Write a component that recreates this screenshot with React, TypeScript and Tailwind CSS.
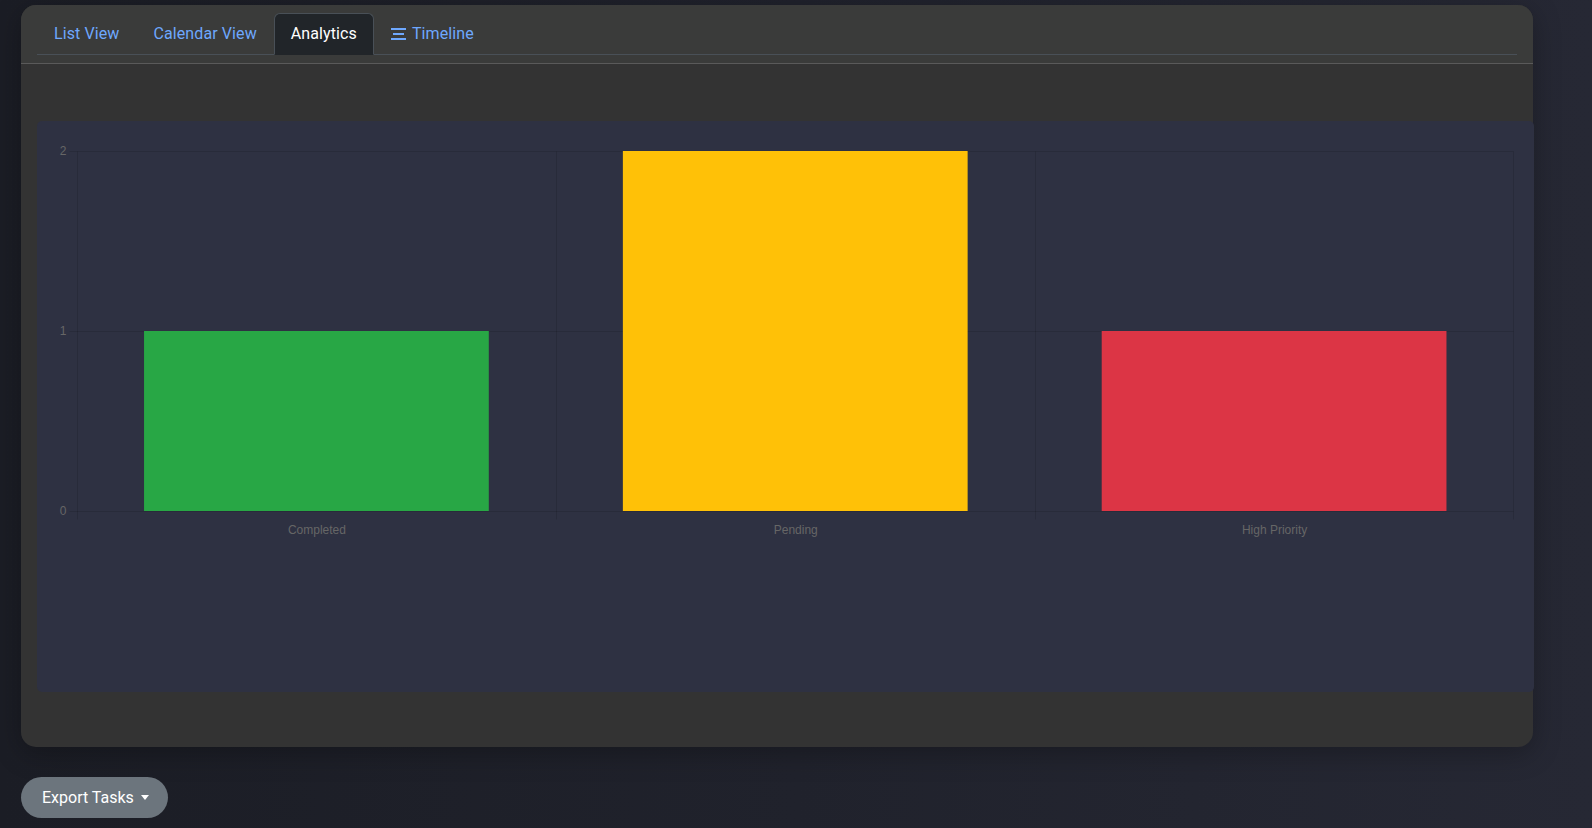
import React from "react";

const W = 1497;
const H = 571;
const LEFT = 40.5;
const RIGHT = 1476.5;
const Y2 = 30.5;
const Y1 = 210.5;
const Y0 = 390.5;

const bars = [
  { label: "Completed", value: 1, color: "#28a745" },
  { label: "Pending", value: 2, color: "#ffc107" },
  { label: "High Priority", value: 1, color: "#dc3545" },
];

function Chart() {
  const cw = (RIGHT - LEFT + 0.5) / 3;
  const bw = cw * 0.72;
  const grid = "rgba(0,0,0,0.12)";
  return (
    <svg width={W} height={H} className="block">
      {[Y2, Y1, Y0].map((y) => (
        <line key={y} x1={LEFT - 8} x2={RIGHT} y1={y} y2={y} stroke={grid} strokeWidth={1} />
      ))}
      {[0, 1, 2, 3].map((i) => {
        const x = Math.min(Math.round(LEFT + cw * i - 0.5) + 0.5, RIGHT);
        return <line key={i} x1={x} x2={x} y1={Y2} y2={Y0 + 8} stroke={grid} strokeWidth={1} />;
      })}
      {bars.map((b, i) => {
        const x = LEFT - 0.5 + cw * i + (cw - bw) / 2;
        const top = Y0 - 0.5 - (Y0 - Y2) * (b.value / 2);
        return <rect key={b.label} x={x} y={top} width={bw} height={Y0 - 0.5 - top} fill={b.color} />;
      })}
      {[
        ["2", Y2],
        ["1", Y1],
        ["0", Y0],
      ].map(([t, y]) => (
        <text
          key={t as string}
          x={29.5}
          y={(y as number) + 3.8}
          textAnchor="end"
          fill="#666"
          fontSize={12}
          fontFamily="'Liberation Sans', Arial, sans-serif"
        >
          {t}
        </text>
      ))}
      {bars.map((b, i) => (
        <text
          key={b.label}
          x={LEFT + cw * i + cw / 2}
          y={413}
          textAnchor="middle"
          fill="#666"
          fontSize={12}
          fontFamily="'Liberation Sans', Arial, sans-serif"
        >
          {b.label}
        </text>
      ))}
    </svg>
  );
}

function TimelineIcon() {
  return (
    <svg width="15" height="14" viewBox="0 0 15 14" className="mr-[6px]">
      <rect x="0" y="1" width="15" height="2" fill="currentColor" />
      <rect x="2" y="6" width="11" height="2" fill="currentColor" />
      <rect x="0" y="11" width="15" height="2" fill="currentColor" />
    </svg>
  );
}

export default function App() {
  const tabs = ["List View", "Calendar View", "Analytics", "Timeline"];
  return (
    <div
      className="min-h-screen w-full bg-[linear-gradient(90deg,#1b1d25_0%,#20222c_50%,#262834_100%)] pl-[21px] pt-[5px] pb-[10px]"
      style={{ fontFamily: "Roboto, 'Noto Sans', Arial, sans-serif" }}
    >
      <div className="w-[1512px] rounded-[15px] bg-[#333333] shadow-[0_6px_28px_rgba(0,0,0,0.28)]">
        <div className="rounded-t-[15px] border-b border-[#5a5a5a] bg-[#3a3b3a] px-4 py-2">
          <ul className="flex border-b border-[#495057]">
            {tabs.map((t) => {
              const active = t === "Analytics";
              return (
                <li key={t} className="-mb-px">
                  <span
                    className={
                      active
                        ? "flex h-[42px] items-center rounded-t-[6px] border border-[#495057] border-b-[#212529] bg-[#212529] px-4 text-[16px] leading-6 tracking-[0.1px] text-white"
                        : "flex h-[42px] items-center rounded-t-[6px] border border-transparent px-4 text-[16px] leading-6 tracking-[0.1px] text-[#6ea8fe]"
                    }
                  >
                    {t === "Timeline" && <TimelineIcon />}
                    {t}
                  </span>
                </li>
              );
            })}
          </ul>
        </div>
        <div className="px-4 pt-[57px] pb-[55px]">
          <div className="h-[571px] w-[1497px] rounded-[5px] bg-[#2e3142]">
            <Chart />
          </div>
        </div>
      </div>
      <button className="mt-[30px] flex h-[41px] w-[147px] items-center whitespace-nowrap rounded-full bg-[#6c757d] px-[21px] text-[16px] leading-6 text-white">
        Export Tasks
        <span className="ml-[7px] inline-block h-0 w-0 border-x-[4px] border-t-[5px] border-x-transparent border-t-white" />
      </button>
    </div>
  );
}
